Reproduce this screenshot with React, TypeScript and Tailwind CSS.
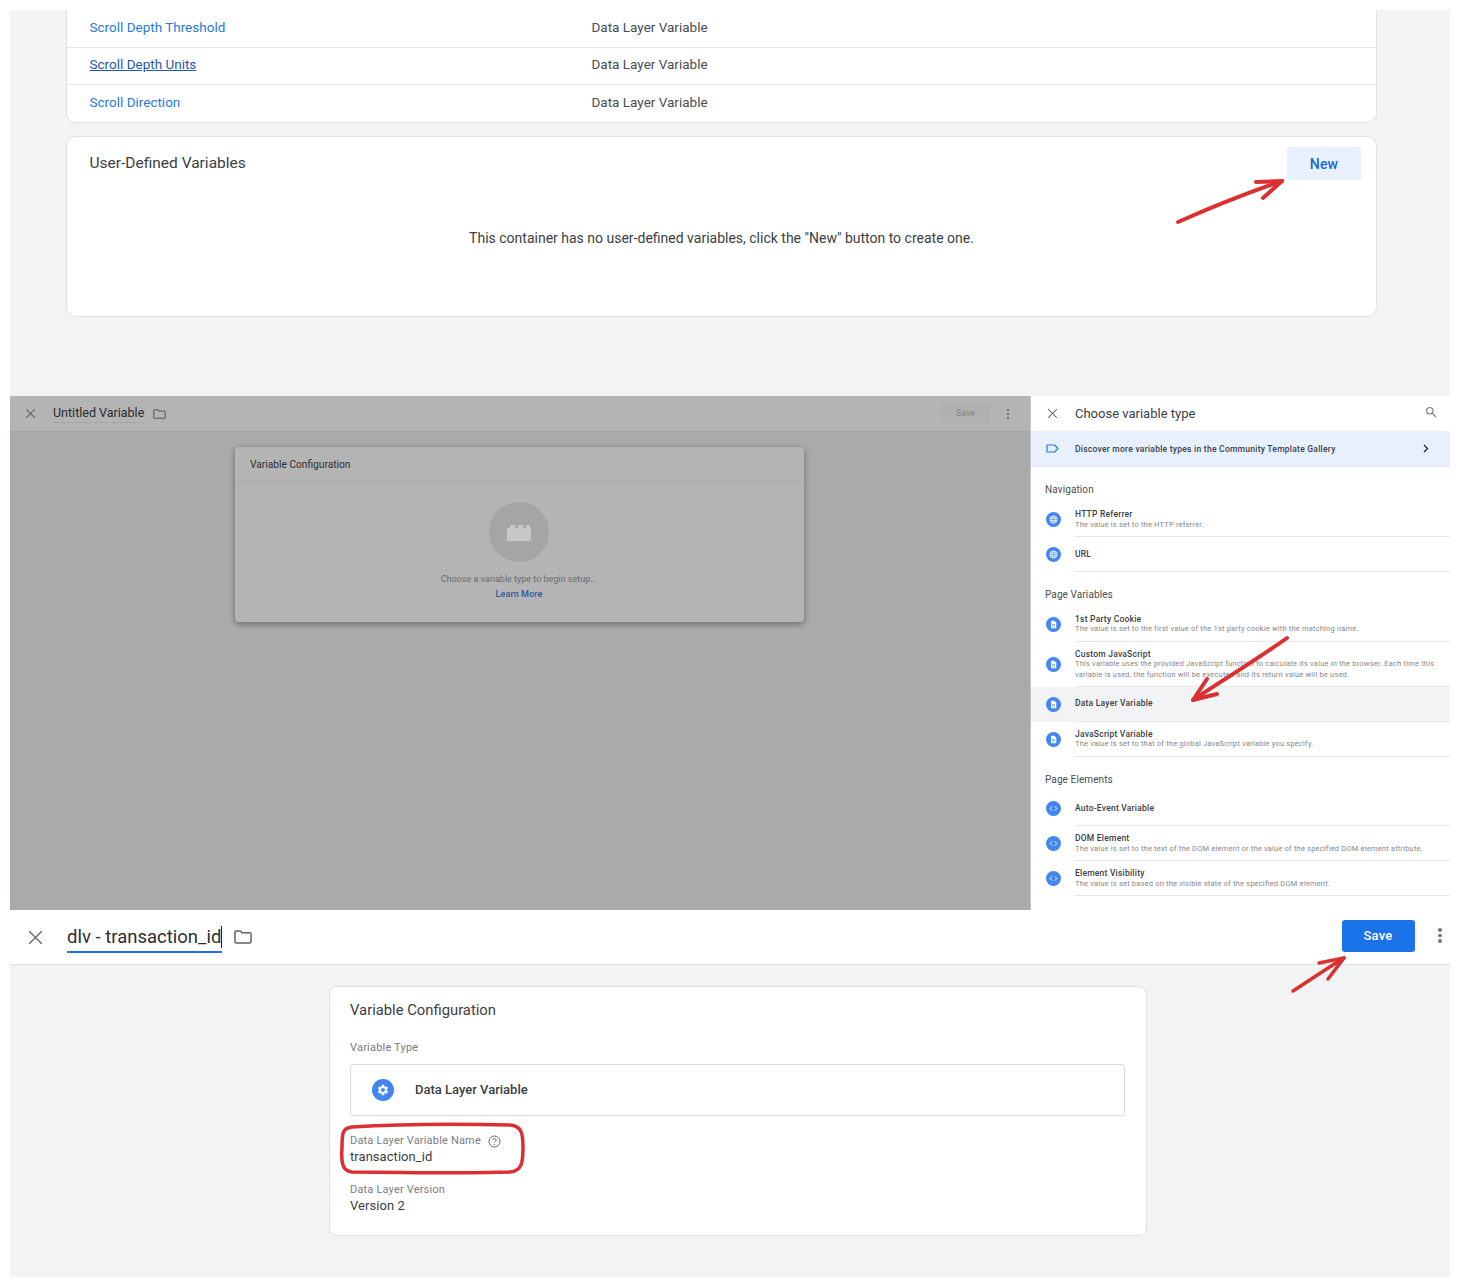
import React from "react";

type Item = {
  title: string;
  desc?: string[];
  active?: boolean;
};

type Group = {
  heading: string;
  kind: "globe" | "doc" | "code";
  items: Item[];
};

const groups: Group[] = [
  {
    heading: "Navigation",
    kind: "globe",
    items: [
      { title: "HTTP Referrer", desc: ["The value is set to the HTTP referrer."] },
      { title: "URL" },
    ],
  },
  {
    heading: "Page Variables",
    kind: "doc",
    items: [
      {
        title: "1st Party Cookie",
        desc: ["The value is set to the first value of the 1st party cookie with the matching name."],
      },
      {
        title: "Custom JavaScript",
        desc: [
          "This variable uses the provided JavaScript function to calculate its value in the browser. Each time this",
          "variable is used, the function will be executed and its return value will be used.",
        ],
      },
      { title: "Data Layer Variable", active: true },
      {
        title: "JavaScript Variable",
        desc: ["The value is set to that of the global JavaScript variable you specify."],
      },
    ],
  },
  {
    heading: "Page Elements",
    kind: "code",
    items: [
      { title: "Auto-Event Variable" },
      {
        title: "DOM Element",
        desc: ["The value is set to the text of the DOM element or the value of the specified DOM element attribute."],
      },
      {
        title: "Element Visibility",
        desc: ["The value is set based on the visible state of the specified DOM element."],
      },
    ],
  },
];

const CloseIcon = ({ size, color }: { size: number; color: string }) => (
  <svg width={size} height={size} viewBox="4 4 16 16" fill="none" stroke={color} strokeWidth="1.8" className="shrink-0">
    <path d="M4 4l16 16M20 4L4 20" />
  </svg>
);

const FolderIcon = ({ w, h, color }: { w: number; h: number; color: string }) => (
  <svg width={w} height={h} viewBox="0 0 18 14" fill="none" stroke={color} strokeWidth="1.5">
    <path d="M1 2.2c0-.7.5-1.2 1.2-1.2h4.3l1.5 1.7h7.8c.7 0 1.2.5 1.2 1.2v7.9c0 .7-.5 1.2-1.2 1.2H2.2c-.7 0-1.2-.5-1.2-1.2z" />
  </svg>
);

const Dots = ({ color, size }: { color: string; size: number }) => (
  <div className="flex flex-col items-center gap-[2px]">
    <span className="rounded-full" style={{ width: size, height: size, background: color }} />
    <span className="rounded-full" style={{ width: size, height: size, background: color }} />
    <span className="rounded-full" style={{ width: size, height: size, background: color }} />
  </div>
);

const TypeIcon = ({ kind }: { kind: Group["kind"] }) => (
  <svg width="15" height="15" viewBox="0 0 15 15" className="shrink-0">
    <circle cx="7.5" cy="7.5" r="7.5" fill="#4285f4" />
    {kind === "globe" && (
      <g fill="none" stroke="#fff" strokeWidth="0.8">
        <circle cx="7.5" cy="7.5" r="3.6" />
        <ellipse cx="7.5" cy="7.5" rx="1.6" ry="3.6" />
        <path d="M3.9 6.3h7.2M3.9 8.7h7.2" />
      </g>
    )}
    {kind === "doc" && (
      <g>
        <path d="M5 3.8h3.4l1.9 1.9v5.5H5z" fill="#fff" />
        <path d="M6 7.4h3M6 9h3" stroke="#4285f4" strokeWidth="0.7" />
      </g>
    )}
    {kind === "code" && (
      <path d="M6.2 5.4L4.1 7.5l2.1 2.1M8.8 5.4l2.1 2.1-2.1 2.1" fill="none" stroke="#fff" strokeWidth="1" />
    )}
  </svg>
);

const Row = ({ name, className, underline }: { name: string; className: string; underline?: boolean }) => (
  <div className={`flex items-center pl-[22.5px] text-[13.5px] ${className}`}>
    <span className={`w-[502px] ${underline ? "text-[#1f5aa8] underline" : "text-[#2a78db]"}`}>{name}</span>
    <span className="text-[#4a4d50]">Data Layer Variable</span>
  </div>
);

export default function App() {
  return (
    <div className="relative h-[1287px] w-[1460px] overflow-hidden bg-white px-[10px] pt-[10px] font-['Roboto',sans-serif]">
      {/* variables list */}
      <section className="h-[386px] bg-[#f1f3f4] pl-[56px] pr-[73px]">
        <div className="h-[113px] rounded-b-[10px] border-x border-b border-[#dfe1e3] bg-white">
          <Row name="Scroll Depth Threshold" className="h-[38px] border-b border-[#e3e5e7] pb-[3px]" />
          <Row name="Scroll Depth Units" underline className="h-[37px] border-b border-[#e3e5e7] pb-[3px]" />
          <Row name="Scroll Direction" className="h-[37px] pb-[2px]" />
        </div>
        <div className="mt-[13px] h-[181px] rounded-[10px] border border-[#dfe1e3] bg-white pl-[22.5px] pr-[15px]">
          <div className="flex items-start justify-between pt-[10px]">
            <h2 className="pt-[5px] text-[15.5px] leading-[22px] text-[#3c4043]">User-Defined Variables</h2>
            <button className="h-[33px] w-[74px] rounded-[3px] bg-[#e8f0fe] pt-[1px] text-[14px] font-medium tracking-[0.2px] text-[#1967d2]">New</button>
          </div>
          <p className="mt-[48px] pr-[7.5px] text-center text-[14px] leading-[20px] text-[#3c4043]">
            This container has no user-defined variables, click the "New" button to create one.
          </p>
        </div>
      </section>

      {/* choose type */}
      <section className="flex h-[514px]">
        <div className="w-[1020px] bg-[#a9abab]">
          <div className="flex h-[36px] items-center border-b border-[#a3a5a5] bg-[#b4b4b4] pl-[16px] pr-[21px]">
            <CloseIcon size={9} color="#5c5e60" />
            <span className="ml-[18px] border-b border-[#a6a6a6] text-[12.5px] leading-[18px] text-[#2a2b2c]">Untitled Variable</span>
            <span className="ml-[9px] flex"><FolderIcon w={13} h={10} color="#55575a" /></span>
            <button className="ml-auto h-[19px] w-[49px] rounded-[2px] bg-[#b0b0b0] text-[8.5px] font-medium tracking-[0.2px] text-[#8a8a8a]">Save</button>
            <span className="ml-[17px]"><Dots color="#5a5c5e" size={2} /></span>
          </div>
          <div className="ml-[225px] mt-[15px] h-[175px] w-[569px] rounded-[4px] bg-[#b4b4b4] shadow-[0_2px_6px_rgba(0,0,0,0.4)]">
            <div className="flex h-[35px] items-center border-b border-[#a8a8a8] pl-[15px] pt-[1px] text-[10.2px] text-[#2e2f30]">Variable Configuration</div>
            <div className="flex flex-col items-center pr-[1px] pt-[20px]">
              <div className="flex h-[60px] w-[60px] items-center justify-center rounded-full bg-[#a3a5a6]">
                <svg width="26" height="18" viewBox="0 0 26 18" fill="#c8c8c8">
                  <path d="M1 5h3V2h5v3h3V2h5v3h3V2h4v3h1v13H1z" />
                </svg>
              </div>
              <p className="mt-[11px] text-[9px] leading-[12px] text-[#6a6b6c]">Choose a variable type to begin setup...</p>
              <p className="mt-[3px] text-[9px] font-medium leading-[12px] tracking-[0.1px] text-[#2b5c9f]">Learn More</p>
            </div>
          </div>
        </div>

        <aside className="w-[420px] border-l border-[#c4c4c4] bg-white">
          <div className="flex h-[35px] items-center pl-[17px] pr-[13px]">
            <CloseIcon size={9} color="#6a6d70" />
            <span className="ml-[18px] text-[13px] text-[#3c4043]">Choose variable type</span>
            <svg className="mb-[3px] ml-auto" width="12" height="12" viewBox="0 0 24 24" fill="none" stroke="#80868b" strokeWidth="2.4">
              <circle cx="9.5" cy="9.5" r="6.5" />
              <path d="M14.5 14.5L22 22" />
            </svg>
          </div>
          <div className="flex h-[36px] items-center border-b border-[#e2e6ec] bg-[#e8f0fe] pl-[15px] pr-[21px]">
            <svg width="13" height="9" viewBox="0 0 13 9" fill="none" stroke="#1a73e8" strokeWidth="1.2">
              <path d="M1 1.5c0-.3.2-.5.5-.5h7.2l3.2 3.5-3.2 3.5H1.5c-.3 0-.5-.2-.5-.5z" />
            </svg>
            <span className="ml-[16px] pt-[1px] text-[8.5px] font-medium tracking-[0.25px] text-[#3c4043]">Discover more variable types in the Community Template Gallery</span>
            <svg className="ml-auto" width="6" height="9" viewBox="0 0 6 9" fill="none" stroke="#202124" strokeWidth="1.3">
              <path d="M1 1l3.5 3.5L1 8" />
            </svg>
          </div>
          {groups.map((g, gi) => (
            <div key={g.heading}>
              <div className={`pl-[14px] text-[10px] tracking-[0.1px] text-[#4a4d50] ${gi === 0 ? "h-[35px] pt-[15px]" : "h-[34.5px] pt-[15px]"}`}>{g.heading}</div>
              {g.items.map((it) => (
                <div key={it.title} className={`flex ${it.active ? "bg-[#f1f3f4]" : ""}`}>
                  <div className="flex w-[44px] items-center pl-[14.5px]">
                    <TypeIcon kind={g.kind} />
                  </div>
                  <div className={`flex flex-1 flex-col justify-center border-b border-[#e6e7e8] ${it.desc ? "pt-[1px]" : "pb-[1px]"} ${it.desc && it.desc.length > 1 ? "h-[45px]" : "h-[35px]"}`}>
                    <div className="text-[8.5px] font-medium leading-[10px] tracking-[0.22px] text-[#3c4043]">{it.title}</div>
                    {it.desc?.map((d) => (
                      <div key={d} className="mt-[0.5px] whitespace-nowrap text-[7.5px] leading-[10px] tracking-[0.19px] text-[#85888b]">{d}</div>
                    ))}
                  </div>
                </div>
              ))}
            </div>
          ))}
        </aside>
      </section>

      {/* configured variable */}
      <section className="h-[367px] bg-[#f1f3f4]">
        <div className="flex h-[55px] items-center border-b border-[#dfe1e3] bg-white pl-[18.5px] pr-[6.500px]">
          <CloseIcon size={13} color="#6a6d70" />
          <span className="ml-[25.5px] flex h-[32px] items-center border-b-2 border-[#1a73e8] pt-[2px] text-[18.5px] leading-[24px] text-[#2b2d30]">
            dlv - transaction_id
            <span className="ml-[-0.5px] h-[22px] w-px bg-[#202124]" />
          </span>
          <span className="ml-[12.5px] flex"><FolderIcon w={18} h={14} color="#5f6368" /></span>
          <button className="mb-[3px] ml-auto h-[32px] w-[73px] rounded-[3px] bg-[#1a73e8] text-[13px] font-medium tracking-[0.2px] text-white">Save</button>
          <span className="mb-[3px] ml-[23.500px] mr-[2px]"><Dots color="#6f7276" size={3.5} /></span>
        </div>
        <div className="ml-[318.5px] mt-[21px] h-[250px] w-[818px] rounded-[8px] border border-[#dfe1e3] bg-white pl-[20.5px] pr-[21px] pt-[13px]">
          <h3 className="text-[14.8px] leading-[20px] text-[#3c4043]">Variable Configuration</h3>
          <div className="mt-[21px] text-[11px] leading-[14px] tracking-[0.2px] text-[#797c80]">Variable Type</div>
          <div className="mt-[9px] flex h-[52px] items-center rounded-[3px] border border-[#dadce0] pb-[1px] pl-[21px]">
            <svg width="22" height="22" viewBox="0 0 22 22">
              <circle cx="11" cy="11" r="11" fill="#4285f4" />
              <path
                fill="#fff"
                transform="translate(4.5 4.5) scale(0.54)"
                d="M19.14 12.94c.04-.3.06-.61.06-.94 0-.32-.02-.64-.07-.94l2.03-1.58a.49.49 0 0 0 .12-.61l-1.92-3.32a.488.488 0 0 0-.59-.22l-2.39.96c-.5-.38-1.03-.7-1.62-.94l-.36-2.54a.484.484 0 0 0-.48-.41h-3.84c-.24 0-.43.17-.47.41l-.36 2.54c-.59.24-1.13.57-1.62.94l-2.39-.96c-.22-.08-.47 0-.59.22L2.74 8.87c-.12.21-.08.47.12.61l2.03 1.58c-.05.3-.09.63-.09.94s.02.64.07.94l-2.03 1.58a.49.49 0 0 0-.12.61l1.92 3.32c.12.22.37.29.59.22l2.39-.96c.5.38 1.03.7 1.62.94l.36 2.54c.05.24.24.41.48.41h3.84c.24 0 .44-.17.47-.41l.36-2.54c.59-.24 1.13-.56 1.62-.94l2.39.96c.22.08.47 0 .59-.22l1.92-3.32c.12-.22.07-.47-.12-.61l-2.01-1.58zM12 15.6A3.61 3.61 0 0 1 8.4 12c0-1.98 1.62-3.6 3.6-3.6s3.6 1.62 3.6 3.6-1.62 3.6-3.6 3.6z"
              />
            </svg>
            <span className="ml-[21px] text-[13px] font-medium text-[#3c4043]">Data Layer Variable</span>
          </div>
          <div className="mt-[18px] flex items-center text-[11px] leading-[14px] tracking-[0.18px] text-[#797c80]">
            Data Layer Variable Name
            <svg className="ml-[7px]" width="13" height="13" viewBox="0 0 13 13" fill="none" stroke="#5f6368" strokeWidth="1">
              <circle cx="6.5" cy="6.5" r="5.5" />
              <path d="M4.8 5.2c0-1 .8-1.6 1.7-1.6s1.7.6 1.7 1.5c0 1.2-1.7 1.2-1.7 2.5" />
              <path d="M6.5 9v.9" />
            </svg>
          </div>
          <div className="text-[13px] leading-[18px] tracking-[0.05px] text-[#3c4043]">transaction_id</div>
          <div className="mt-[17px] text-[11px] leading-[14px] tracking-[0.18px] text-[#797c80]">Data Layer Version</div>
          <div className="text-[13px] leading-[18px] tracking-[0.05px] text-[#3c4043]">Version 2</div>
        </div>
      </section>

      {/* hand-drawn annotations over the screenshots */}
      <svg className="pointer-events-none absolute left-0 top-0" width="1460" height="1287" fill="none" stroke="#dc2f2f" strokeLinecap="round" strokeLinejoin="round">
        <g strokeWidth="4">
          <path d="M1178 222C1210 208 1250 192 1282 181" />
          <path d="M1256 182L1282 181L1263 198" />
          <path d="M1287 638C1262 656 1220 682 1193 700" />
          <path d="M1207 679L1193 700L1217 694" />
        </g>
        <g strokeWidth="3.5">
          <path d="M1293 991C1310 980 1326 969 1344 958" />
          <path d="M1319 963L1344 958L1328 979" />
          <path d="M352 1127C400 1124 470 1124 510 1125C522 1126 523 1134 523 1148C523 1162 522 1171 510 1172C460 1174 400 1172 352 1172C342 1171 341 1162 342 1148C342 1134 342 1128 352 1127Z" />
        </g>
      </svg>
    </div>
  );
}
